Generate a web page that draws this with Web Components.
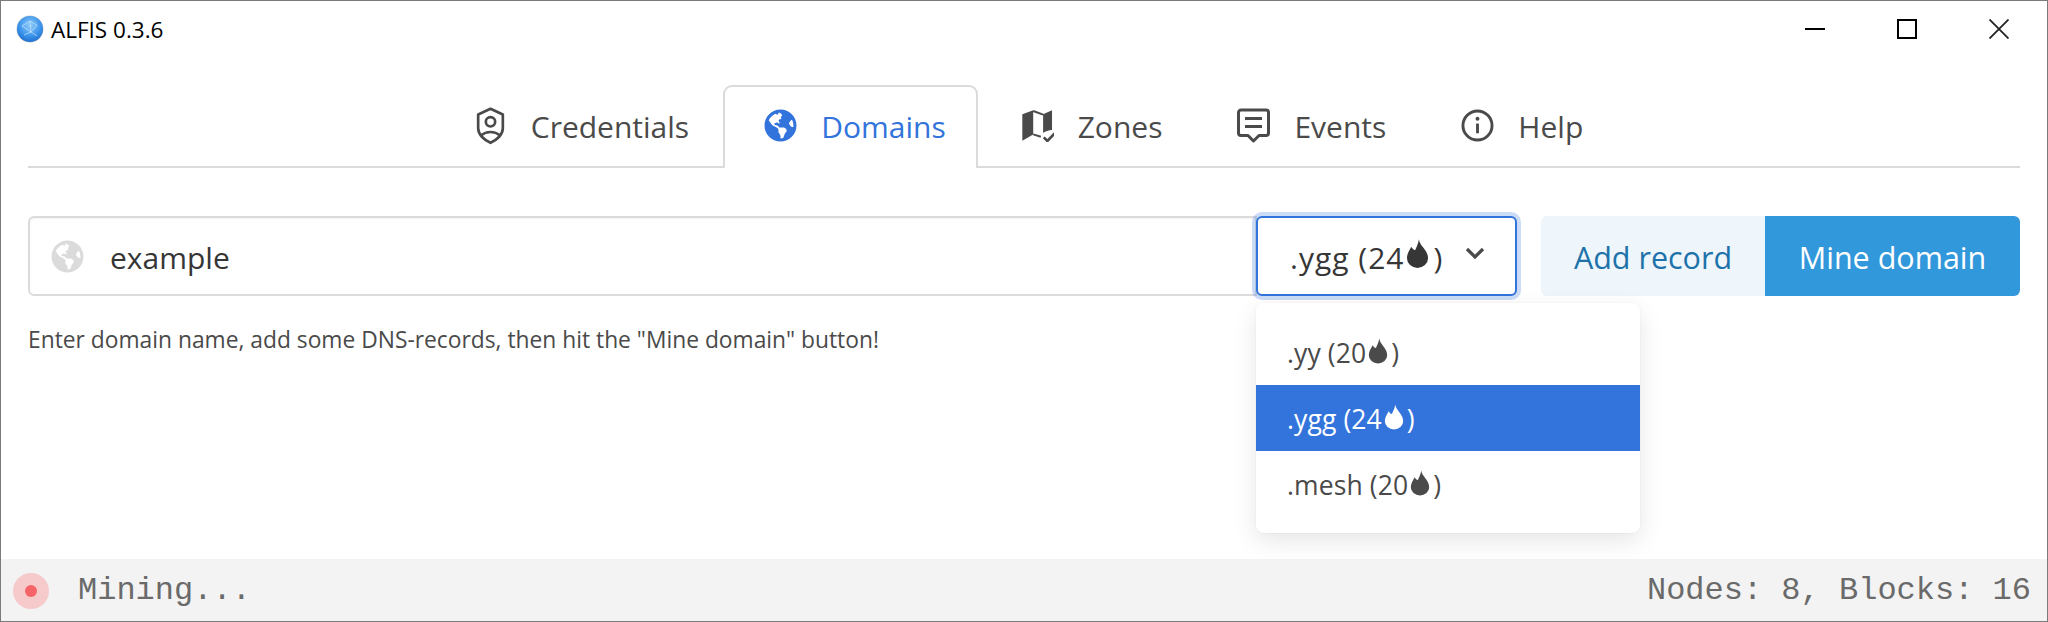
<!DOCTYPE html>
<html>
<head>
<meta charset="utf-8">
<title>ALFIS 0.3.6</title>
<style>
  html, body { margin: 0; padding: 0; background: #fff; }
  body { font-family: "Open Sans", "Liberation Sans", sans-serif; color: #4a4a4a; }
</style>
</head>
<body>
<alfis-window>
  <title-bar slot="title">ALFIS 0.3.6</title-bar>
  <nav-tabs slot="tabs">
    <tab-item icon="shield">Credentials</tab-item>
    <tab-item icon="globe" active>Domains</tab-item>
    <tab-item icon="map">Zones</tab-item>
    <tab-item icon="comment">Events</tab-item>
    <tab-item icon="info">Help</tab-item>
  </nav-tabs>
  <domain-form slot="main"></domain-form>
  <status-bar slot="status" left="Mining..." right="Nodes: 8, Blocks: 16"></status-bar>
</alfis-window>

<script>
const ICONS = {
  globe: '<svg viewBox="0 0 496 512" fill="currentColor"><path d="M248 8C111.03 8 0 119.03 0 256s111.03 248 248 248 248-111.03 248-248S384.97 8 248 8zm82.29 357.6c-3.9 3.88-7.99 7.95-11.31 11.28-2.99 3-5.1 6.7-6.17 10.71-1.51 5.66-2.73 11.38-4.77 16.87l-17.39 46.85c-13.76 3-28 4.69-42.65 4.69v-27.38c1.69-12.62-7.64-36.26-22.63-51.25-6-6-9.37-14.14-9.37-22.63v-32.01c0-11.64-6.27-22.34-16.46-27.97-14.37-7.95-34.81-19.06-48.81-26.11-11.48-5.78-22.1-13.14-31.65-21.75l-.8-.72a114.792 114.792 0 0 1-18.06-20.74c-9.38-13.77-24.66-36.42-34.59-51.14 20.47-45.5 57.36-82.04 103.2-101.89l24.01 12.01C203.48 89.74 216 82.01 216 70.11v-11.3c7.99-1.29 16.12-2.11 24.45-2.41l28.3 28.3c6.25 6.25 6.25 16.38 0 22.63L264 112l-10.34 10.34c-3.12 3.12-3.12 8.19 0 11.31l4.69 4.69c3.12 3.12 3.12 8.19 0 11.31l-8 8a8.008 8.008 0 0 1-5.67 2.34h-8.99c-2.08 0-4.08.81-5.58 2.27l-9.92 9.65a8.008 8.008 0 0 0-1.58 9.31l15.59 31.19c2.66 5.32-1.21 11.58-7.15 11.58h-5.64c-1.93 0-3.79-.7-5.24-1.96l-9.28-8.06a16.017 16.017 0 0 0-15.55-3.1l-31.17 10.39a11.95 11.95 0 0 0-8.17 11.34c0 4.53 2.56 8.66 6.61 10.69l11.08 5.54c9.41 4.71 19.79 7.16 30.31 7.16s22.59 27.29 32 32h66.75c8.49 0 16.62 3.37 22.63 9.37l13.69 13.69a30.503 30.503 0 0 1 8.93 21.57 46.536 46.536 0 0 1-13.72 32.98zM417 274.25c-5.79-1.45-10.84-5-14.15-9.97l-17.98-26.97a23.97 23.97 0 0 1 0-26.62l19.59-29.38c2.32-3.47 5.5-6.29 9.24-8.15l12.98-6.49C440.2 193.59 448 223.87 448 256c0 8.67-.74 17.16-1.82 25.54L417 274.25z"/></svg>',
  shield: '<svg viewBox="22.500 16 99 116" fill="none" stroke="currentColor" stroke-width="8"><path d="M72 24 L109 41 V82 C109 102 90 118 72 126 C54 118 35 102 35 82 V41 Z" stroke-linejoin="round"/><circle cx="72" cy="63" r="14"/><path d="M43 104 C60 90 84 90 101 104"/></svg>',
  map: '<svg viewBox="28 26 100 100" fill="currentColor"><path d="M32 42 L65 30 V103 L32 122 Z"/><path d="M65 32 L95 43 M65 103 L88 110" fill="none" stroke="currentColor" stroke-width="6"/><path d="M95 42 L122 30 V90 C112 91 102 94 95 99 Z"/><path d="M97 112 L108 123 L130 100" fill="none" stroke="currentColor" stroke-width="8"/></svg>',
  comment: '<svg viewBox="0 0 33 36" fill="none" stroke="currentColor" stroke-width="3"><path d="M4 2 H29 A2.500 2.500 0 0 1 31.500 4.500 V25 A2.500 2.500 0 0 1 29 27.500 H22 L16.500 33 L11 27.500 H4 A2.500 2.500 0 0 1 1.500 25 V4.500 A2.500 2.500 0 0 1 4 2 Z" stroke-linejoin="round"/><path d="M8 10.500 H25 M8 18.500 H25"/></svg>',
  info: '<svg viewBox="0 0 34 34" fill="none" stroke="currentColor" stroke-width="3"><circle cx="17" cy="17" r="15"/><path d="M17 15 V25"/><circle cx="17" cy="10" r="2" fill="currentColor" stroke="none"/></svg>',
  fire: '<svg viewBox="0 0 24 30" fill="currentColor"><path d="M13.500 0 C14 7 23 11 23 20 A11 10 0 0 1 1 20 C1 15 3.500 12 5.500 8 C6.500 10 8 11 9.500 11.500 C11 8 13 4 13.500 0 Z"/></svg>'
};

customElements.define('ui-icon', class extends HTMLElement {
  connectedCallback() {
    this.attachShadow({mode: 'open'});
    this.shadowRoot.innerHTML = `
      <style>
        :host { display: inline-flex; flex: none; width: var(--icon-w, 33px); height: var(--icon-h, 33px); }
        :host([name=shield]) { height: 39px; }
        :host([name=comment]) { height: 36px; }
        svg { width: 100%; height: 100%; display: block; }
      </style>
      ${ICONS[this.getAttribute('name')]}`;
  }
});

customElements.define('alfis-window', class extends HTMLElement {
  connectedCallback() {
    this.attachShadow({mode: 'open'});
    this.shadowRoot.innerHTML = `
      <style>
        :host { display: flex; flex-direction: column; box-sizing: border-box; width: 2048px; height: 622px; border: 1px solid #7b7b7b; background: #fff; overflow: hidden; }
        .tabs { display: block; padding: 0 27px; }
        .main { display: block; flex: 1; padding: 0 27px; }
      </style>
      <slot name="title"></slot>
      <div class="tabs"><slot name="tabs"></slot></div>
      <div class="main"><slot name="main"></slot></div>
      <slot name="status"></slot>`;
  }
});

customElements.define('title-bar', class extends HTMLElement {
  connectedCallback() {
    this.attachShadow({mode: 'open'});
    this.shadowRoot.innerHTML = `
      <style>
        :host { display: flex; align-items: center; height: 56px; font-size: 22.5px; color: #000; font-family: "Open Sans", sans-serif; padding-right: 2px; }
        .logo { width: 28px; height: 28px; margin: 0 7px 0 15px; }
        .name { flex: 1; }
        .btn { width: 92px; height: 56px; display: flex; align-items: center; justify-content: center; }
        .btn svg { width: 20px; height: 20px; display: block; }
      </style>
      <svg class="logo" viewBox="0 0 28 28">
        <defs>
          <radialGradient id="g" cx="50%" cy="35%" r="70%">
            <stop offset="0" stop-color="#8fcdfb"/><stop offset=".6" stop-color="#3b93ea"/><stop offset="1" stop-color="#1c69c8"/>
          </radialGradient>
        </defs>
        <circle cx="14" cy="14" r="13.500" fill="#9aa7b3" opacity=".6"/>
        <circle cx="14" cy="14" r="13" fill="url(#g)"/>
        <path d="M6 11 L14 6 L21 10 L15 17 L8 20 M14 6 L15 17 L21 21 M6 11 L15 17" fill="none" stroke="#d5ebff" stroke-width=".8" opacity=".8"/>
      </svg>
      <span class="name"><slot></slot></span>
      <div class="btn"><svg viewBox="0 0 20 20"><path d="M0 10 H20" stroke="#000" stroke-width="2"/></svg></div>
      <div class="btn"><svg viewBox="0 0 20 20"><rect x="1" y="1" width="18" height="18" fill="none" stroke="#000" stroke-width="2"/></svg></div>
      <div class="btn"><svg viewBox="0 0 20 20"><path d="M.5 .5 L19.500 19.500 M19.500 .5 L.5 19.500" stroke="#222" stroke-width="1.800"/></svg></div>`;
  }
});

customElements.define('nav-tabs', class extends HTMLElement {
  connectedCallback() {
    this.attachShadow({mode: 'open'});
    this.shadowRoot.innerHTML = `
      <style>
        :host { display: flex; justify-content: center; gap: 2px; padding-top: 28px; border-bottom: 2px solid #dbdbdb; }
      </style>
      <slot></slot>`;
  }
});

customElements.define('tab-item', class extends HTMLElement {
  connectedCallback() {
    this.attachShadow({mode: 'open'});
    this.shadowRoot.innerHTML = `
      <style>
        :host { display: flex; align-items: center; box-sizing: border-box; height: 83px; margin-bottom: -2px; padding: 0 30px 2px 39px; gap: 24px; font-size: 30px; color: #4a4a4a; border: 2px solid transparent; border-bottom: 0; border-radius: 9px 9px 0 0; }
        :host([active]) { color: #3273dc; border-color: #dbdbdb; background: #fff; }
        ui-icon { position: relative; top: -1px; }
      </style>
      <ui-icon name="${this.getAttribute('icon')}"></ui-icon><span><slot></slot></span>`;
  }
});

customElements.define('domain-select', class extends HTMLElement {
  connectedCallback() {
    this.attachShadow({mode: 'open'});
    const fire = '<ui-icon name="fire" class="fire"></ui-icon>';
    this.shadowRoot.innerHTML = `
      <style>
        :host { display: block; position: relative; flex: none; width: 261px; height: 80px; z-index: 2; }
        .box { box-sizing: border-box; height: 100%; display: flex; align-items: center; padding: 2px 30px 0 32px; border: 2px solid #3273dc; border-radius: 6px; box-shadow: 0 0 0 4px rgba(50,115,220,.25); background: #fff; font-size: 30px; letter-spacing: 1px; color: #363636; }
        .box .val { flex: 1; white-space: nowrap; display: flex; align-items: center; }
        .box .fire { --icon-w: 23px; --icon-h: 29px; margin: -7px 4px 0 2px; }
        .chev { width: 20px; height: 13px; flex: none; position: relative; top: -4px; }
        .menu { position: absolute; left: 0; top: 87px; width: 384px; box-sizing: border-box; padding: 16px 0; background: #fff; border-radius: 8px; box-shadow: 0 8px 24px rgba(10,10,10,.1), 0 0 0 1px rgba(10,10,10,.02); font-size: 26.5px; color: #4a4a4a; }
        .item { height: 66px; box-sizing: border-box; padding: 2px 31px 0; display: flex; align-items: center; white-space: nowrap; letter-spacing: .1px; }
        .item.sel { background: #3273dc; color: #fff; }
        .item .fire { --icon-w: 20px; --icon-h: 26px; margin: -5px 3px 0 2px; }
      </style>
      <div class="box">
        <span class="val">.ygg (24${fire})</span>
        <svg class="chev" viewBox="0 0 20 13"><path d="M2 2 L10 10 L18 2" fill="none" stroke="#4a4a4a" stroke-width="3.200"/></svg>
      </div>
      <div class="menu">
        <div class="item">.yy (20${fire})</div>
        <div class="item sel">.ygg (24${fire})</div>
        <div class="item">.mesh (20${fire})</div>
      </div>`;
  }
});

customElements.define('domain-form', class extends HTMLElement {
  connectedCallback() {
    this.attachShadow({mode: 'open'});
    this.shadowRoot.innerHTML = `
      <style>
        :host { display: block; padding-top: 48px; }
        .row { display: flex; height: 80px; }
        .input { flex: 1; box-sizing: border-box; display: flex; align-items: center; gap: 26px; padding: 0 21px; margin-right: -1px; border: 2px solid #dbdbdb; border-radius: 6px 0 0 6px; box-shadow: inset 0 1px 2px rgba(10,10,10,.05); font-size: 30px; color: #363636; }
        .input span { position: relative; top: 1px; }
        .input ui-icon { color: #dbdbdb; }
        .btns { display: flex; margin-left: 24px; }
        button { font: inherit; font-size: 30.5px; border: 0; padding: 2px 0 0; margin: 0; }
        .add { width: 224px; background: #eef6fc; color: #1d72aa; border-radius: 6px 0 0 6px; }
        .mine { width: 255px; background: #3298dc; color: #fff; border-radius: 0 6px 6px 0; }
        .help { margin: 29px 0 0; font-size: 22.8px; line-height: 30px; color: #4a4a4a; }
      </style>
      <div class="row">
        <div class="input"><ui-icon name="globe"></ui-icon><span>example</span></div>
        <domain-select></domain-select>
        <div class="btns"><button class="add">Add record</button><button class="mine">Mine domain</button></div>
      </div>
      <p class="help">Enter domain name, add some DNS-records, then hit the "Mine domain" button!</p>`;
  }
});

customElements.define('status-bar', class extends HTMLElement {
  connectedCallback() {
    this.attachShadow({mode: 'open'});
    this.shadowRoot.innerHTML = `
      <style>
        :host { display: flex; align-items: center; box-sizing: border-box; height: 62px; padding-top: 1px; background: #f3f3f3; font-family: "Liberation Mono", monospace; font-size: 32px; color: #6a6a6a; }
        .dot { width: 36px; height: 36px; margin: 0 29px 0 12px; border-radius: 50%; background: #f6c9cb; display: flex; align-items: center; justify-content: center; }
        .dot i { width: 12px; height: 12px; border-radius: 50%; background: #f66468; display: block; }
        .left { flex: 1; }
        .right { margin-right: 16px; }
      </style>
      <div class="dot"><i></i></div>
      <span class="left">${this.getAttribute('left')}</span>
      <span class="right">${this.getAttribute('right')}</span>`;
  }
});
</script>
</body>
</html>
